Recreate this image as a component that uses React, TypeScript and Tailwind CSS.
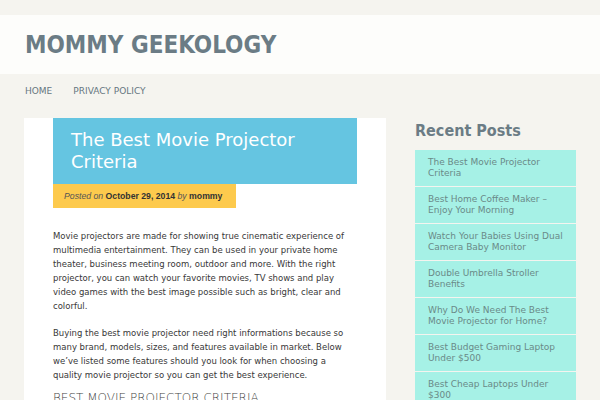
const posts = [
  "The Best Movie Projector Criteria",
  "Best Home Coffee Maker – Enjoy Your Morning",
  "Watch Your Babies Using Dual Camera Baby Monitor",
  "Double Umbrella Stroller Benefits",
  "Why Do We Need The Best Movie Projector for Home?",
  "Best Budget Gaming Laptop Under $500",
  "Best Cheap Laptops Under $300",
];

export default function App() {
  return (
    <div className="h-[400px] overflow-hidden bg-[#f5f4ef] pt-[15px] font-['DejaVu_Sans',sans-serif]">
      {/* header */}
      <header className="flex h-[59px] items-center bg-[#fdfdfb] px-[25px]">
        <h1 className="font-['DejaVu_Sans_Condensed','DejaVu_Sans',sans-serif] text-[24px] font-bold leading-[28px] text-[#6b7c85]">
          MOMMY GEEKOLOGY
        </h1>
      </header>

      <nav className="flex gap-[21px] px-[25px] pt-[10px] text-[9px] leading-[14px] text-[#65767f]">
        <a href="#">HOME</a>
        <a href="#">PRIVACY POLICY</a>
      </nav>

      <div className="mt-[20px] flex gap-[29px] px-[24px]">
        {/* main */}
        <main className="w-[362px] shrink-0 bg-white px-[29px] pb-10">
          <div className="bg-[#65c5e1] pl-[18px] pr-4 pt-[11px] pb-[12px]">
            <h2 className="text-[18px] leading-[21.5px] text-white">The Best Movie Projector Criteria</h2>
          </div>
          <div className="h-6 w-[183px] whitespace-nowrap bg-[#fdca4d] pl-[11px] font-['Liberation_Sans',sans-serif] text-[8.7px] leading-6 text-[#333]">
            <span className="italic text-[#555]">Posted on </span>
            <span className="font-bold">October 29, 2014</span>
            <span className="italic text-[#555]"> by </span>
            <span className="font-bold">mommy</span>
          </div>

          <div className="pr-[2px] text-[8.5px] leading-[14px] text-[#383838]">
            <p className="mt-[21px]">
              Movie projectors are made for showing true cinematic experience of multimedia entertainment. They can be
              used in your private home theater, business meeting room, outdoor and more. With the right projector, you
              can watch your favorite movies, TV shows and play video games with the best image possible such as bright,
              clear and colorful.
            </p>
            <p className="mt-[13px]">
              Buying the best movie projector need right informations because so many brand, models, sizes, and
              features available in market. Below we’ve listed some features should you look for when choosing a
              quality movie projector so you can get the best experience.
            </p>
            <h3 className="mt-[8px] text-[12px] font-light leading-[16px] text-[#444]">BEST MOVIE PROJECTOR CRITERIA</h3>
          </div>
        </main>

        {/* sidebar */}
        <aside className="w-[161px] shrink-0 pt-[3px]">
          <h2 className="mb-[9px] font-['DejaVu_Sans_Condensed','DejaVu_Sans',sans-serif] text-[16px] font-bold leading-[20px] text-[#6b7c85]">
            Recent Posts
          </h2>
          <ul className="flex flex-col gap-px">
            {posts.map((p) => (
              <li key={p} className="h-[36px] bg-[#a6f1e6] pl-[13px] pr-2 pt-[7px] text-[9px] leading-[11px] text-[#6a8a88]">
                {p}
              </li>
            ))}
          </ul>
        </aside>
      </div>
    </div>
  );
}
